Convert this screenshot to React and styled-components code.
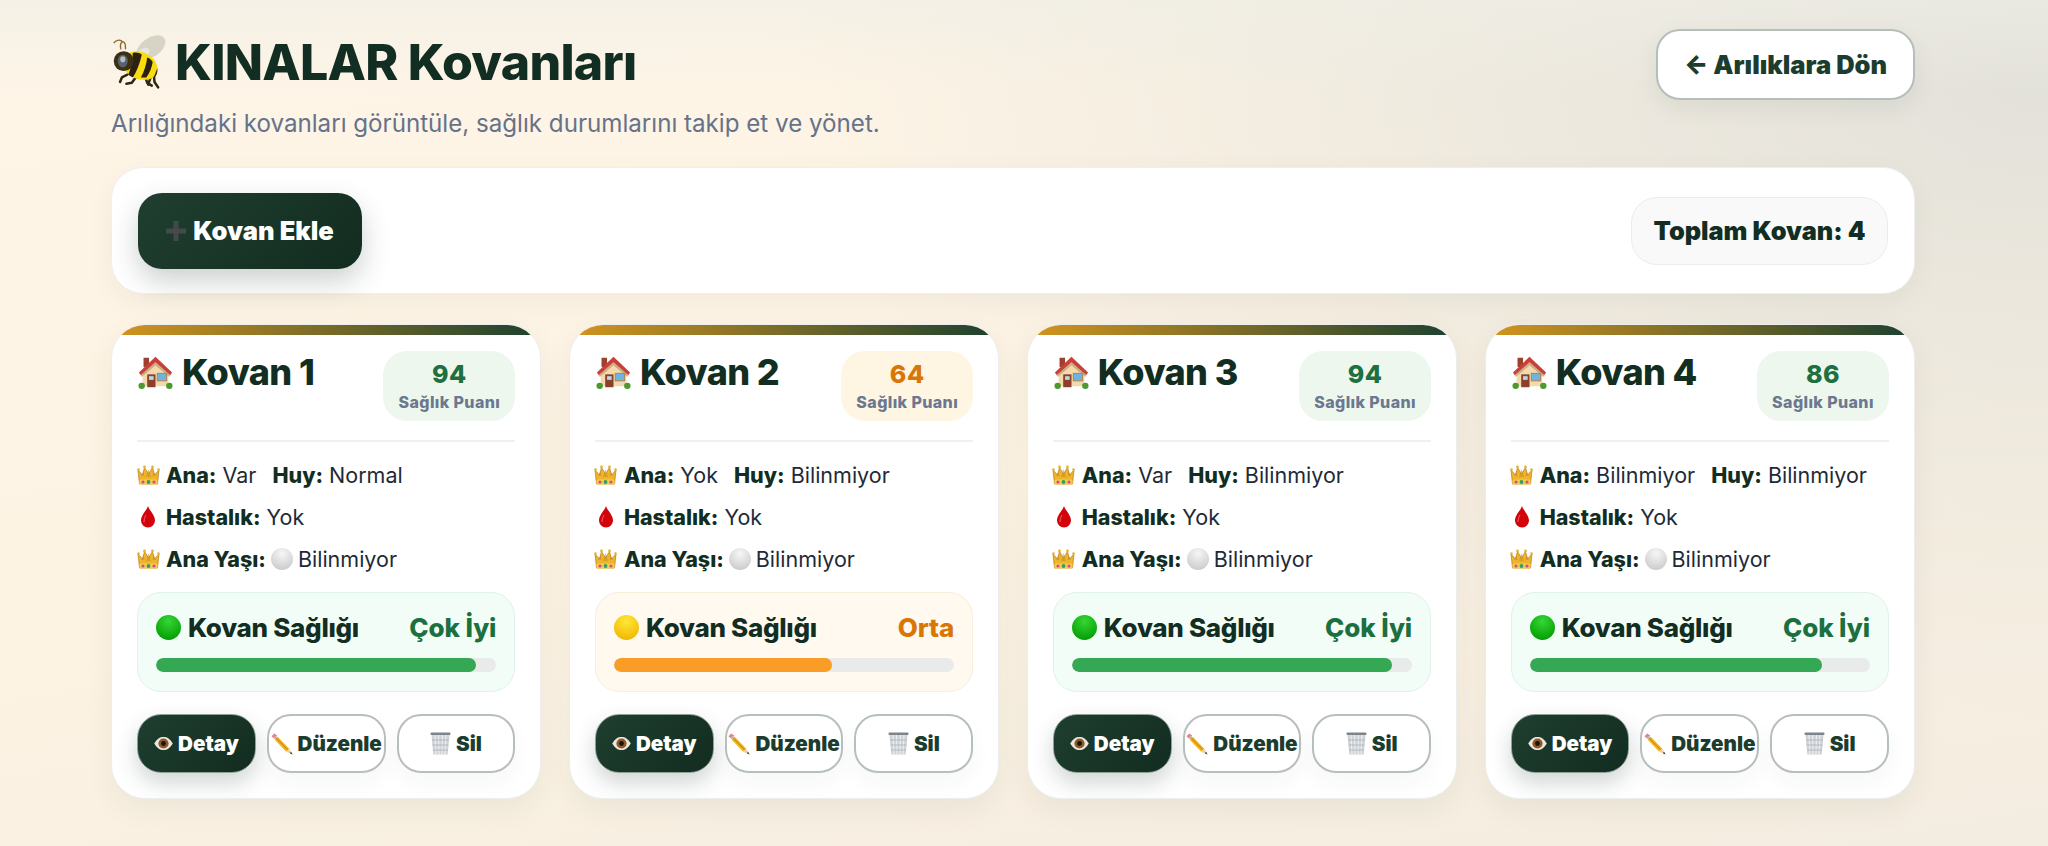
import React from "react";
import styled, { createGlobalStyle } from "styled-components";

const Global = createGlobalStyle`
  html, body { margin: 0; padding: 0; }
  body {
    min-height: 846px;
    font-family: Inter, "Noto Sans", sans-serif;
    background:
      linear-gradient(180deg, rgba(238, 238, 230, 0.55) 0, rgba(238, 238, 230, 0) 90px),
      radial-gradient(1250px 640px at 100% 10%, rgba(216, 218, 214, 0.72), rgba(216, 218, 214, 0) 100%),
      linear-gradient(170deg, #fdf5e7 0%, #fdf3e3 55%, #f3ece0 100%);
    background-repeat: no-repeat;
    overflow: hidden;
  }
`;

const Page = styled.div`
  box-sizing: border-box;
  height: 846px;
  padding: 29px 133px 0 111px;
`;
const Header = styled.header`
  display: flex;
  justify-content: space-between;
  align-items: flex-start;
`;
const Title = styled.h1`
  margin: 0;
  display: flex;
  align-items: center;
  gap: 6px;
  font-size: 50px;
  line-height: 66px;
  font-weight: 800;
  letter-spacing: -0.75px;
  color: #122e22;
`;
const Subtitle = styled.p`
  margin: 14px 0 0;
  font-size: 24.15px;
  line-height: 30px;
  color: #667289;
`;
const BackButton = styled.button`
  box-sizing: border-box;
  width: 259px;
  height: 71px;
  border: 2px solid #b4bfba;
  border-radius: 24px;
  background: #fff;
  color: #1c3d2e;
  font: 900 25.5px Inter, sans-serif;
  box-shadow: 0 8px 24px rgba(18, 46, 34, 0.07);
`;
const Toolbar = styled.section`
  box-sizing: border-box;
  margin-top: 28px;
  height: 127px;
  padding: 0 26px;
  display: flex;
  justify-content: space-between;
  align-items: center;
  background: #fff;
  border: 1px solid #eef0f0;
  border-radius: 32px;
  box-shadow: 0 8px 28px rgba(18, 46, 34, 0.05);
`;
const AddButton = styled.button`
  box-sizing: border-box;
  width: 224px;
  height: 76px;
  display: flex;
  align-items: center;
  justify-content: center;
  gap: 7px;
  border: none;
  border-radius: 24px;
  background: linear-gradient(135deg, #203f30, #122c20);
  color: #fff;
  font: 900 25.5px Inter, sans-serif;
  box-shadow: 0 12px 28px rgba(18, 46, 34, 0.22);
`;
const TotalPill = styled.div`
  box-sizing: border-box;
  width: 257px;
  height: 68px;
  display: flex;
  align-items: center;
  justify-content: center;
  background: #f9f9f9;
  border: 1px solid #ececec;
  border-radius: 26px;
  color: #122e22;
  font-size: 25.3px;
  font-weight: 900;
`;
const Grid = styled.main`
  margin-top: 30px;
  display: grid;
  grid-template-columns: repeat(4, 1fr);
  gap: 27.5px;
`;
const Card = styled.article`
  box-sizing: border-box;
  height: 475px;
  background: #fff;
  border: 1px solid #eceeee;
  border-radius: 34px;
  overflow: hidden;
  box-shadow: 0 10px 30px rgba(18, 46, 34, 0.06);
`;
const TopBar = styled.div`
  height: 10px;
  background: linear-gradient(90deg, #d4951f, #1c4030);
`;
const CardBody = styled.div`
  padding: 15px 25px 0;
`;
const CardHead = styled.div`
  display: flex;
  justify-content: space-between;
  align-items: flex-start;
  padding-bottom: 19px;
  border-bottom: 2px solid #eff0f2;
`;
const HiveName = styled.h2`
  margin: 0;
  display: flex;
  align-items: center;
  gap: 9px;
  padding-left: 1px;
  font-size: 36px;
  line-height: 44px;
  font-weight: 800;
  letter-spacing: -0.6px;
  color: #122e22;
`;
const Score = styled.div`
  box-sizing: border-box;
  width: 132px;
  height: 70px;
  margin-top: 1px;
  padding-top: 8px;
  text-align: center;
  border-radius: 24px;
  background: ${p => (p.$warn ? "#fff5e3" : "#edf7ee")};
`;
const ScoreValue = styled.div`
  font-size: 25px;
  line-height: 30px;
  font-weight: 800;
  letter-spacing: 0.5px;
  color: ${p => (p.$warn ? "#d97706" : "#1e7040")};
`;
const ScoreLabel = styled.div`
  margin-top: 3px;
  font-size: 16px;
  line-height: 20px;
  font-weight: 800;
  letter-spacing: 0.4px;
  color: #6b788f;
`;
const Info = styled.div`
  margin-top: 12px;
`;
const Row = styled.div`
  display: flex;
  align-items: center;
  height: 42px;
  font-size: 21.5px;
  color: #1e2a36;
  white-space: pre;
`;
const EmojiSlot = styled.span`
  display: inline-flex;
  justify-content: center;
  width: 22px;
  margin-right: 7px;
`;
const InlineEmoji = styled.span`
  display: inline-flex;
  margin: 0 5px;
`;
const Label = styled.b`
  font-weight: 800;
  color: #122e22;
`;
const Pair = styled.span`
  margin-right: 16px;
`;
const Health = styled.div`
  box-sizing: border-box;
  margin-top: 12px;
  height: 100px;
  padding: 17px 18px 0;
  border-radius: 24px;
  border: 1px solid ${p => (p.$warn ? "#f8eeda" : "#dff3e8")};
  background: ${p => (p.$warn ? "#fff9ef" : "#f2fdf7")};
`;
const HealthTop = styled.div`
  display: flex;
  justify-content: space-between;
  align-items: center;
  height: 34px;
  font-size: 26px;
  font-weight: 800;
`;
const HealthName = styled.span`
  display: flex;
  align-items: center;
  gap: 7px;
  letter-spacing: -0.3px;
  color: #122e22;
`;
const HealthState = styled.span`
  letter-spacing: -0.1px;
  color: ${p => (p.$warn ? "#d97706" : "#1c7040")};
`;
const Track = styled.div`
  margin-top: 14px;
  height: 14px;
  border-radius: 7px;
  background: #e8ebe9;
  overflow: hidden;
`;
const Fill = styled.div`
  height: 100%;
  border-radius: 7px;
  background: ${p => (p.$warn ? "#f99d26" : "#34a853")};
`;
const Actions = styled.div`
  margin-top: 22px;
  display: grid;
  grid-template-columns: repeat(3, 1fr);
  gap: 11px;
`;
const ActionButton = styled.button`
  box-sizing: border-box;
  height: 59px;
  padding: 0;
  display: flex;
  align-items: center;
  justify-content: center;
  gap: 5px;
  border-radius: 24px;
  font: 900 20.6px Inter, sans-serif;
  border: ${p => (p.$primary ? "1px solid #8fa098" : "2px solid #b6bfbb")};
  background: ${p => (p.$primary ? "linear-gradient(135deg, #1f3f30, #122c20)" : "#fff")};
  color: ${p => (p.$primary ? "#fff" : "#1c3d2e")};
  box-shadow: ${p => (p.$primary ? "0 10px 22px rgba(18, 46, 34, 0.2)" : "0 10px 22px rgba(18, 46, 34, 0.04)")};
`;

const Bee = () => (
  <svg width="58" height="58" viewBox="0 0 64 64" style={{ flex: "none" }}>
    <ellipse cx="44" cy="16" rx="18" ry="10.500" fill="#d8d4c5" transform="rotate(-35 44 16)" />
    <ellipse cx="34" cy="24" rx="10" ry="5.500" fill="#e8e5da" transform="rotate(-40 34 24)" />
    <path d="M11 18C9 11 13 8 15 11c1 1 1 4 1 7M3 11c3-4 8-4 10-1" fill="none" stroke="#8a6a2b" strokeWidth="1.500" />
    <path d="M18 46l-6 3-2 5M28 48l-5 7-6 1M38 49l2 6 5 3M47 44l1 10 4 6M44 48l-3 9" stroke="#33260f" strokeWidth="2.800" fill="none" strokeLinecap="round" strokeLinejoin="round" />
    <ellipse cx="32" cy="36" rx="20" ry="15" fill="#f8dc12" transform="rotate(24 32 36)" />
    <path d="M24 22c4-1 8 0 10 2-2 8-5 18-10 25l-5-3c3-7 5-16 5-24zM40 27c3 1 5 3 6 5-1 6-3 12-7 17l-6 0c4-7 6-15 7-22z" fill="#2c2110" />
    <path d="M51 39c1 4-1 9-4 11 1-4 3-7 4-11z" fill="#2c2110" />
    <circle cx="14" cy="31" r="11" fill="#3b2f14" />
    <ellipse cx="13" cy="31" rx="5.500" ry="7" fill="#59636c" />
    <ellipse cx="13" cy="29" rx="2.800" ry="3.400" fill="#b4bec6" />
  </svg>
);
const House = () => (
  <svg width="35" height="35" viewBox="0 0 38 38" style={{ flex: "none" }}>
    <rect x="6" y="3" width="6" height="10" fill="#9c4030" />
    <path d="M5 19L19 7l14 12v15H5z" fill="#f3d9ab" />
    <path d="M19 2L1 19l2 3L19 8l16 14 2-3z" fill="#c8403a" />
    <path d="M3 22L19 8l16 14-1 2L19 11 4 24z" fill="#b79a72" opacity=".7" />
    <rect x="10" y="21" width="9" height="14" fill="#8c3f2b" />
    <rect x="12" y="23" width="5" height="4" fill="#b9d7e6" />
    <rect x="21" y="20" width="10" height="8" fill="#6fb3e0" stroke="#a98a5c" strokeWidth="1.200" />
    <circle cx="4" cy="33.500" r="3.500" fill="#4c9a2e" />
    <circle cx="34" cy="33.500" r="3.500" fill="#4c9a2e" />
  </svg>
);
const Crown = () => (
  <svg width="23" height="20" viewBox="0 0 23 20" style={{ flex: "none" }}>
    <path d="M1 5l4.500 5L7.500 2.500 11.500 9l4-6.500L17.500 10 22 5l-1.500 14h-18z" fill="#eeb52c" stroke="#b9791a" strokeWidth=".7" strokeLinejoin="round" />
    <path d="M6.500 6L7.500 11H4zM16.500 6l-1 5H19zM11.500 4L9 12h5z" fill="#c98a1c" opacity=".55" />
    <circle cx="1.500" cy="4.500" r="1.300" fill="#e7b32c" />
    <circle cx="21.500" cy="4.500" r="1.300" fill="#e7b32c" />
    <circle cx="7.500" cy="2" r="1.400" fill="#e7b32c" />
    <circle cx="15.500" cy="2" r="1.400" fill="#e7b32c" />
    <rect x="2.500" y="14.500" width="18" height="5" rx="1.500" fill="#f6cd48" />
    <circle cx="6" cy="17" r="1.600" fill="#d6499c" />
    <circle cx="11.500" cy="17" r="1.900" fill="#2fa06a" />
    <circle cx="17" cy="17" r="1.600" fill="#d6499c" />
  </svg>
);
const Drop = () => (
  <svg width="14" height="22" viewBox="0 0 14 22" style={{ flex: "none" }}>
    <path d="M7 0c1 4 7 9 7 14.500a7 7 0 0 1-14 0C0 9 6 4 7 0z" fill="#d2030b" />
    <path d="M3 16c0-3 1-5 2-7" fill="none" stroke="#f2636a" strokeWidth="1" />
  </svg>
);
const Ball = ({ c1, c2, size = 22 }) => {
  const id = `ball-${c1.slice(1)}`;
  return (
    <svg width={size} height={size} viewBox="0 0 22 22" style={{ flex: "none" }}>
      <defs>
        <radialGradient id={id} cx="50%" cy="25%" r="80%">
          <stop offset="0%" stopColor={c1} />
          <stop offset="100%" stopColor={c2} />
        </radialGradient>
      </defs>
      <circle cx="11" cy="11" r="11" fill={`url(#${id})`} />
    </svg>
  );
};
const Eye = () => (
  <svg width="19" height="13" viewBox="0 0 20 14" style={{ flex: "none" }}>
    <path d="M0 7c3-5 6-7 10-7s7 2 10 7c-3 5-6 7-10 7S3 12 0 7z" fill="#efe6dd" />
    <circle cx="10" cy="7" r="5.500" fill="#8a5a2a" />
    <circle cx="10" cy="7" r="2.600" fill="#1c1208" />
  </svg>
);
const Pencil = () => (
  <svg width="22" height="22" viewBox="0 0 21 21" style={{ flex: "none" }}>
    <path d="M0.500 3l2.500-2.500L6 2.500 3 5.500z" fill="#e8827e" />
    <path d="M2.500 4.500l2-2 1.500 1.500-2 2z" fill="#b8b8b8" />
    <path d="M3.500 6.500L6.500 3.500 17.500 15l-3 3z" fill="#f4b51f" />
    <path d="M5 5l11 11" stroke="#c98a14" strokeWidth="1" />
    <path d="M14.500 18l3-3 3 5.500z" fill="#eccfa5" />
    <path d="M19.200 18l1.300 2.500-2.500-1.200z" fill="#333" />
  </svg>
);
const Trash = () => (
  <svg width="21" height="23" viewBox="0 0 21 23" style={{ flex: "none" }}>
    <rect x="0.500" y="0.500" width="20" height="2.500" rx="1" fill="#7e858a" />
    <path d="M1.500 3h18l-1.800 19.500H3.300z" fill="#cfd4d8" />
    <path d="M5 3l1 19M8.500 3l.5 19M12.500 3l-.5 19M16 3l-1 19" stroke="#eef0f2" strokeWidth="1.100" />
    <path d="M2 8h17M2.500 13h16M3 18h15" stroke="#a9b0b5" strokeWidth=".8" />
  </svg>
);
const Plus = () => (
  <svg width="20" height="20" viewBox="0 0 20 20" style={{ flex: "none" }}>
    <path d="M7.500 0h5v7.500H20v5h-7.500V20h-5v-7.500H0v-5h7.500z" fill="#45494a" />
  </svg>
);

const hives = [
  { name: "Kovan 1", score: 94, ana: "Var", huy: "Normal", state: "Çok İyi" },
  { name: "Kovan 2", score: 64, ana: "Yok", huy: "Bilinmiyor", state: "Orta", warn: true },
  { name: "Kovan 3", score: 94, ana: "Var", huy: "Bilinmiyor", state: "Çok İyi" },
  { name: "Kovan 4", score: 86, ana: "Bilinmiyor", huy: "Bilinmiyor", state: "Çok İyi" },
];

const HiveCard = ({ hive }) => (
  <Card>
    <TopBar />
    <CardBody>
      <CardHead>
        <HiveName><House />{hive.name}</HiveName>
        <Score $warn={hive.warn}>
          <ScoreValue $warn={hive.warn}>{hive.score}</ScoreValue>
          <ScoreLabel>Sağlık Puanı</ScoreLabel>
        </Score>
      </CardHead>
      <Info>
        <Row>
          <EmojiSlot><Crown /></EmojiSlot>
          <Pair><Label>Ana:</Label> {hive.ana}</Pair>
          <span><Label>Huy:</Label> {hive.huy}</span>
        </Row>
        <Row>
          <EmojiSlot><Drop /></EmojiSlot>
          <span><Label>Hastalık:</Label> Yok</span>
        </Row>
        <Row>
          <EmojiSlot><Crown /></EmojiSlot>
          <Label>Ana Yaşı:</Label>
          <InlineEmoji><Ball c1="#f6f6f6" c2="#c9c9c9" /></InlineEmoji>
          <span>Bilinmiyor</span>
        </Row>
      </Info>
      <Health $warn={hive.warn}>
        <HealthTop>
          <HealthName>
            {hive.warn ? <Ball c1="#ffe838" c2="#eeb400" size={25} /> : <Ball c1="#35d635" c2="#009a00" size={25} />}
            Kovan Sağlığı
          </HealthName>
          <HealthState $warn={hive.warn}>{hive.state}</HealthState>
        </HealthTop>
        <Track>
          <Fill $warn={hive.warn} style={{ width: `${hive.score}%` }} />
        </Track>
      </Health>
      <Actions>
        <ActionButton $primary><Eye />Detay</ActionButton>
        <ActionButton><Pencil />Düzenle</ActionButton>
        <ActionButton><Trash />Sil</ActionButton>
      </Actions>
    </CardBody>
  </Card>
);

export default function App() {
  return (
    <Page>
      <Global />
      <Header>
        <div>
          <Title><Bee />KINALAR Kovanları</Title>
          <Subtitle>Arılığındaki kovanları görüntüle, sağlık durumlarını takip et ve yönet.</Subtitle>
        </div>
        <BackButton>← Arılıklara Dön</BackButton>
      </Header>
      <Toolbar>
        <AddButton><Plus />Kovan Ekle</AddButton>
        <TotalPill>Toplam Kovan: 4</TotalPill>
      </Toolbar>
      <Grid>
        {hives.map(h => <HiveCard key={h.name} hive={h} />)}
      </Grid>
    </Page>
  );
}
